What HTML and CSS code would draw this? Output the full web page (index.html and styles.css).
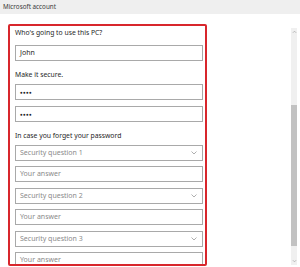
FILE: index.html
```html
<!DOCTYPE html>
<html>
<head>
<meta charset="utf-8">
<link rel="stylesheet" href="styles.css">
</head>
<body>
<div class="titlebar">Microsoft account</div>
<div class="main">
  <div class="pane">
    <div class="frame">
      <div class="label first">Who's going to use this PC?</div>
      <div class="field value">John</div>
      <div class="label">Make it secure.</div>
      <div class="fields">
        <div class="field dots">●●●●</div>
        <div class="field dots">●●●●</div>
      </div>
      <div class="label">In case you forget your password</div>
      <div class="fields">
        <div class="field select">Security question 1<svg class="chev" viewBox="0 0 6 4"><path d="M0.5 0.5 L3 3 L5.5 0.5" fill="none" stroke="#9a9a9a" stroke-width="0.8"/></svg></div>
        <div class="field">Your answer</div>
        <div class="field select">Security question 2<svg class="chev" viewBox="0 0 6 4"><path d="M0.5 0.5 L3 3 L5.5 0.5" fill="none" stroke="#9a9a9a" stroke-width="0.8"/></svg></div>
        <div class="field">Your answer</div>
        <div class="field select">Security question 3<svg class="chev" viewBox="0 0 6 4"><path d="M0.5 0.5 L3 3 L5.5 0.5" fill="none" stroke="#9a9a9a" stroke-width="0.8"/></svg></div>
        <div class="field">Your answer</div>
      </div>
    </div>
  </div>
  <div class="scrollbar">
    <div class="sb-arrow"><svg viewBox="0 0 6 4"><path d="M1 3 L3 1 L5 3" fill="none" stroke="#a0a0a0" stroke-width="0.8"/></svg></div>
    <div class="sb-track"><div class="sb-thumb"></div></div>
    <div class="sb-arrow"><svg viewBox="0 0 6 4"><path d="M1 1 L3 3 L5 1" fill="none" stroke="#a0a0a0" stroke-width="0.8"/></svg></div>
  </div>
</div>
</body>
</html>
```
FILE: styles.css
```css
* { box-sizing: border-box; }
html, body {
  margin: 0;
  padding: 0;
  width: 300px;
  height: 267px;
  overflow: hidden;
  background: #ffffff;
  font-family: "Noto Sans", "Open Sans", sans-serif;
}
.titlebar {
  height: 14px;
  background: #efefef;
  color: #3a3a3a;
  font-size: 6.3px;
  line-height: 13px;
  padding-left: 3px;
}
.main {
  display: flex;
  height: 253px;
}
.pane {
  flex: 1;
}
.frame {
  margin: 10px 0 0 8px;
  width: 199px;
  height: 242px;
  border: 2px solid #d8262c;
  border-radius: 2px;
  padding: 0 2px 0 5px;
  overflow: hidden;
  display: flex;
  flex-direction: column;
}
.label {
  font-size: 6.8px;
  line-height: 12px;
  color: #262626;
  margin: 8px 0 3px;
  flex: none;
}
.label.first {
  margin: 1px 0 6px;
}
.fields {
  display: flex;
  flex-direction: column;
  gap: 5.5px;
  flex: none;
}
.field {
  flex: none;
  height: 16px;
  border: 1px solid #a9a9a9;
  font-size: 7px;
  line-height: 14px;
  padding-left: 4px;
  color: #8a8a8a;
  display: flex;
  align-items: center;
  justify-content: space-between;
  padding-right: 5px;
}
.field.value {
  color: #1e1e1e;
}
.field.dots {
  color: #1e1e1e;
  font-size: 4.5px;
  letter-spacing: 0.3px;
}
.chev {
  width: 6px;
  height: 4px;
}
.scrollbar {
  width: 6px;
  margin: 14px 3px 0 0;
  height: 237px;
  display: flex;
  flex-direction: column;
  background: #f0f0f0;
}
.sb-arrow {
  height: 8px;
  display: flex;
  align-items: center;
  justify-content: center;
  flex: none;
}
.sb-arrow svg {
  width: 5px;
  height: 4px;
}
.sb-track {
  flex: 1;
}
.sb-thumb {
  margin-top: 69px;
  height: 141px;
  background: #c2c2c2;
}
```
